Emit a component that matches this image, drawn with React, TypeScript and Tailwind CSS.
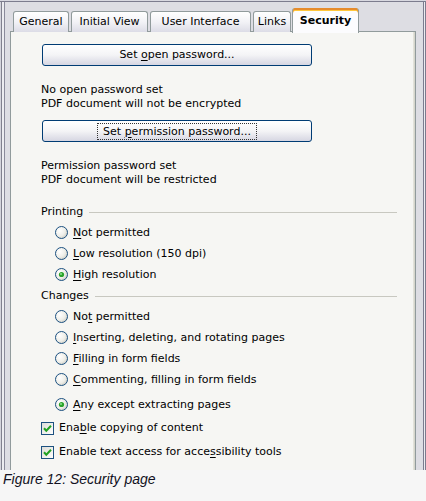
import type { ReactNode } from "react";

const font = "font-['DejaVu_Sans',sans-serif] text-[11px] leading-[14px] text-black";

const Radio = ({ checked }: { checked?: boolean }) => (
  <svg width="13" height="13" viewBox="0 0 13 13" className="shrink-0">
    <defs>
      <radialGradient id={checked ? "rg1" : "rg0"} cx="0.35" cy="0.35" r="0.75">
        <stop offset="0" stopColor="#ffffff" />
        <stop offset="0.6" stopColor="#eeeee8" />
        <stop offset="1" stopColor="#c8c8c0" />
      </radialGradient>
    </defs>
    <circle cx="6.5" cy="6.5" r="6" fill={`url(#${checked ? "rg1" : "rg0"})`} stroke="#1c5180" />
    {checked && (
      <>
        <circle cx="6.5" cy="6.5" r="2.6" fill="#2aa32a" />
        <circle cx="6" cy="6" r="1" fill="#8fe08f" />
      </>
    )}
  </svg>
);

const Check = () => (
  <svg width="13" height="13" viewBox="0 0 13 13" className="shrink-0">
    <defs>
      <linearGradient id="cg" x1="0" y1="0" x2="1" y2="1">
        <stop offset="0" stopColor="#dcdcd6" />
        <stop offset="1" stopColor="#ffffff" />
      </linearGradient>
    </defs>
    <rect x="0.5" y="0.5" width="12" height="12" fill="url(#cg)" stroke="#1c5180" />
    <path d="M3 6.2 L5.3 8.7 L10 3.8" fill="none" stroke="#21a121" strokeWidth="2" />
  </svg>
);

const U = ({ children }: { children: ReactNode }) => (
  <span className="underline underline-offset-[2px]">{children}</span>
);

const RadioRow = ({ checked, children, tall }: { checked?: boolean; children: ReactNode; tall?: boolean }) => (
  <div className={`flex items-center gap-[5px] pl-[14px] ${tall ? "mt-[4px]" : ""} h-[21px]`}>
    <Radio checked={checked} />
    <span>{children}</span>
  </div>
);

const CheckRow = ({ children }: { children: ReactNode }) => (
  <div className="flex items-center gap-[5px] h-[24px]">
    <Check />
    <span>{children}</span>
  </div>
);

const Group = ({ label }: { label: string }) => (
  <div className="flex items-center h-[14px] pr-[18px]">
    <span>{label}</span>
    <div className="flex-1 h-px bg-[#c8c8c0] ml-[6px]" />
  </div>
);

const Tab = ({ label, w }: { label: string; w: string }) => (
  <div
    className={`${w} h-[21px] flex items-center justify-center rounded-t-[3px] border border-b-0 border-[#919b9c] bg-gradient-to-b from-white via-[#f2f2f6] to-[#dcdce6]`}
  >
    {label}
  </div>
);

const Button = ({ children }: { children: ReactNode }) => (
  <div className="w-[270px] h-[22px] flex items-center justify-center rounded-[3px] border border-[#003c74] bg-gradient-to-b from-white via-[#f4f4f6] to-[#d6d6e2] ml-[1px]">
    {children}
  </div>
);

export default function App() {
  return (
    <div className="w-[426px] h-[501px] bg-[#f6f6f6]">
      <div
        className={`${font} relative h-[470px] overflow-hidden bg-[#dddde3] shadow-[inset_0_1px_0_#d8d8e0,inset_0_2px_0_#7c7c8e,inset_1px_0_0_#d4d4dc,inset_2px_0_0_#80808e,inset_4px_0_0_#ececf0,inset_5px_0_0_#8a8a9a,inset_-1px_0_0_#7c7c8e,inset_-2px_0_0_#ececf0,inset_-3px_0_0_#7c7c8e]`}
      >
        {/* Tabs */}
        <div className="flex items-end h-[32px] pl-[13px] pt-[7px]">
          <Tab label="General" w="w-[56px]" />
          <div className="w-[2px]" />
          <Tab label="Initial View" w="w-[77px]" />
          <div className="w-[2px]" />
          <Tab label="User Interface" w="w-[101px]" />
          <div className="w-[2px]" />
          <Tab label="Links" w="w-[38px]" />
          <div className="w-[1px]" />
          <div className="relative z-10 w-[67px] h-[25px] flex items-center justify-center rounded-t-[3px] border-x border-[#919b9c] bg-[#fcfcfe] font-bold shadow-[inset_0_2px_0_#e68b2c,inset_0_3px_0_#ffc73c] pt-[1px] mb-[-1px]">
            Security
          </div>
        </div>

        {/* Panel */}
        <div className="-mt-px ml-[10px] mr-[10px] h-[440px] border border-b-0 border-[#919b9c] bg-[#f6f6f3] shadow-[inset_-1px_0_0_#d6d6cc,inset_-2px_0_0_#e2e2da] pl-[30px]">
          <div className="mt-[12px]">
            <Button>
              <span>
                Set <U>o</U>pen password...
              </span>
            </Button>
          </div>
          <div className="mt-[17px]">
            <div>No open password set</div>
            <div>PDF document will not be encrypted</div>
          </div>
          <div className="mt-[9px]">
            <Button>
              <span className="border border-dotted border-[#333] px-[5px] leading-[15px]">
                Set <U>p</U>ermission password...
              </span>
            </Button>
          </div>
          <div className="mt-[17px]">
            <div>Permission password set</div>
            <div>PDF document will be restricted</div>
          </div>

          <div className="mt-[18px]">
            <Group label="Printing" />
          </div>
          <div className="mt-[3px]">
            <RadioRow>
              <U>N</U>ot permitted
            </RadioRow>
            <RadioRow>
              <U>L</U>ow resolution (150 dpi)
            </RadioRow>
            <RadioRow checked>
              <U>H</U>igh resolution
            </RadioRow>
          </div>

          <div className="mt-[4px]">
            <Group label="Changes" />
          </div>
          <div className="mt-[3px]">
            <RadioRow>
              No<U>t</U> permitted
            </RadioRow>
            <RadioRow>
              <U>I</U>nserting, deleting, and rotating pages
            </RadioRow>
            <RadioRow>
              <U>F</U>illing in form fields
            </RadioRow>
            <RadioRow>
              <U>C</U>ommenting, filling in form fields
            </RadioRow>
            <RadioRow checked tall>
              <U>A</U>ny except extracting pages
            </RadioRow>
          </div>

          <div className="mt-[1px]">
            <CheckRow>
              Ena<U>b</U>le copying of content
            </CheckRow>
            <CheckRow>
              Enable text access for acce<U>s</U>sibility tools
            </CheckRow>
          </div>
        </div>
      </div>

      <p className="pl-[3px] pt-[1px] font-['Liberation_Sans',sans-serif] italic text-[14px] leading-[17px] text-[#111122]">
        Figure 12: Security page
      </p>
    </div>
  );
}
